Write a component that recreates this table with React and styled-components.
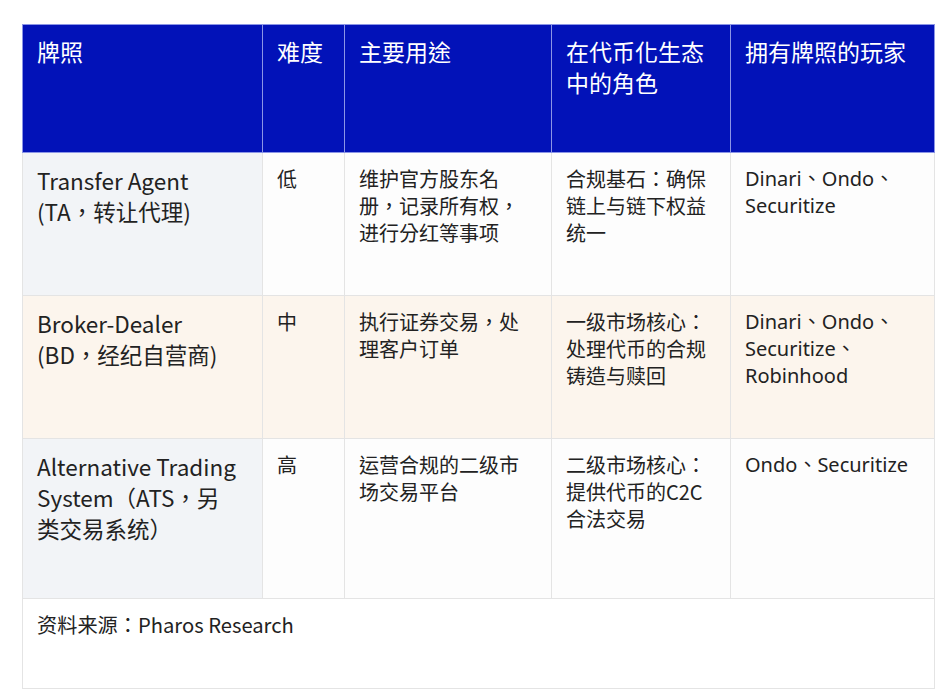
import React from 'react'
import styled, { createGlobalStyle } from 'styled-components'

const GlobalStyle = createGlobalStyle`
  html, body {
    margin: 0;
    padding: 0;
    background: #ffffff;
  }
  body {
    font-family: "Noto Sans CJK TC", "Noto Sans CJK SC", sans-serif;
    color: #222222;
  }
`

const Page = styled.div`
  padding: 24px 0 0 22px;
  width: 942px;
  height: 693px;
  box-sizing: border-box;
  overflow: hidden;
`

const Table = styled.table`
  width: 912px;
  border-collapse: collapse;
  table-layout: fixed;
  border: 1px solid #e4e4e4;
`

const HeadRow = styled.tr`
  height: 128px;
  background: #0212b8;
`

const HeadCell = styled.th`
  border: 1px solid #8b95e6;
  padding: 11px 14px;
  vertical-align: top;
  text-align: left;
  font-weight: 400;
  font-size: 23px;
  line-height: 31px;
  color: #ffffff;
  white-space: pre-line;
`

const Row = styled.tr`
  height: ${(p) => p.$h}px;
  background: ${(p) => (p.$tone === 'warm' ? '#fcf5ed' : '#fdfdfd')};
`

const NameCell = styled.td`
  border: 1px solid #e4e4e4;
  padding: 12px 14px;
  vertical-align: top;
  font-size: 22.5px;
  line-height: 31px;
  white-space: pre-line;
  background: ${(p) => (p.$tone === 'warm' ? '#fcf5ed' : '#f2f4f7')};
`

const Cell = styled.td`
  border: 1px solid #e4e4e4;
  padding: 12px 14px;
  vertical-align: top;
  font-size: 20px;
  line-height: 27px;
  white-space: pre-line;
  font-family: ${(p) =>
    p.$latin
      ? '"Noto Sans", "Noto Sans CJK TC", sans-serif'
      : '"Noto Sans CJK TC", "Noto Sans CJK SC", sans-serif'};
`

const FootRow = styled.tr`
  height: 90px;
  background: #ffffff;
`

const FootCell = styled.td`
  border: 1px solid #e4e4e4;
  padding: 11px 14px;
  vertical-align: top;
  font-size: 20.2px;
  line-height: 30px;
`

const headers = ['牌照', '难度', '主要用途', '在代币化生态\n中的角色', '拥有牌照的玩家']

const rows = [
  {
    h: 143,
    tone: 'cool',
    name: 'Transfer Agent\n(TA，转让代理)',
    level: '低',
    use: '维护官方股东名\n册，记录所有权，\n进行分红等事项',
    role: '合规基石：确保\n链上与链下权益\n统一',
    players: 'Dinari、Ondo、\nSecuritize',
  },
  {
    h: 143,
    tone: 'warm',
    name: 'Broker-Dealer\n(BD，经纪自营商)',
    level: '中',
    use: '执行证券交易，处\n理客户订单',
    role: '一级市场核心：\n处理代币的合规\n铸造与赎回',
    players: 'Dinari、Ondo、\nSecuritize、\nRobinhood',
  },
  {
    h: 160,
    tone: 'cool',
    name: 'Alternative Trading\nSystem（ATS，另\n类交易系统）',
    level: '高',
    use: '运营合规的二级市\n场交易平台',
    role: '二级市场核心：\n提供代币的C2C\n合法交易',
    players: 'Ondo、Securitize',
  },
]

export default function App() {
  return (
    <>
      <GlobalStyle />
      <Page>
        <Table>
          <colgroup>
            <col style={{ width: 240 }} />
            <col style={{ width: 82 }} />
            <col style={{ width: 207 }} />
            <col style={{ width: 179 }} />
            <col style={{ width: 204 }} />
          </colgroup>
          <thead>
            <HeadRow>
              {headers.map((h) => (
                <HeadCell key={h}>{h}</HeadCell>
              ))}
            </HeadRow>
          </thead>
          <tbody>
            {rows.map((r) => (
              <Row key={r.name} $h={r.h} $tone={r.tone}>
                <NameCell $tone={r.tone}>{r.name}</NameCell>
                <Cell>{r.level}</Cell>
                <Cell>{r.use}</Cell>
                <Cell>{r.role}</Cell>
                <Cell $latin>{r.players}</Cell>
              </Row>
            ))}
            <FootRow>
              <FootCell colSpan={5}>资料来源：Pharos Research</FootCell>
            </FootRow>
          </tbody>
        </Table>
      </Page>
    </>
  )
}
